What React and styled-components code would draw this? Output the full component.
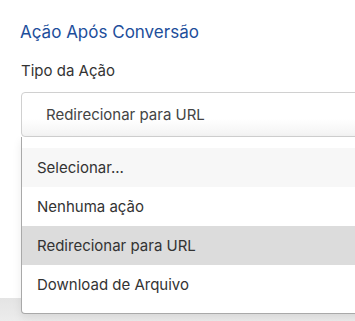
import React from "react";
import styled, { createGlobalStyle } from "styled-components";

const Global = createGlobalStyle`
  html, body { margin: 0; padding: 0; background: #ffffff; overflow: hidden; }
  body { font-family: Inter, "Noto Sans", sans-serif; }
`;

const Page = styled.div`
  width: 355px;
  height: 321px;
  display: flex;
  flex-direction: column;
  overflow: hidden;
`;

const Panel = styled.div`
  height: 298px;
  padding: 20px 0 0 20px;
  box-sizing: border-box;
  background: #ffffff;
`;

const Footer = styled.div`
  flex: 1;
  background: linear-gradient(#e4e4e4, #ececec);
`;

const Heading = styled.h3`
  margin: 0;
  font-size: 17px;
  line-height: 24px;
  font-weight: 400;
  color: #1d4e9b;
`;

const Label = styled.div`
  margin-top: 17px;
  margin-left: 1px;
  font-size: 15px;
  line-height: 20px;
  color: #333333;
`;

const Field = styled.div`
  position: relative;
  margin-top: 11px;
  margin-left: 1px;
  margin-right: -20px;
`;

const Select = styled.div`
  height: 45px;
  box-sizing: border-box;
  border: 1px solid #d0d0d0;
  border-radius: 4px;
  background: linear-gradient(#ffffff 60%, #f3f3f3);
  padding-left: 24px;
  display: flex;
  align-items: center;
  font-size: 15px;
  color: #444444;
`;

const Menu = styled.ul`
  position: absolute;
  top: 45px;
  left: 0;
  right: 0;
  margin: 0;
  list-style: none;
  padding: 11px 0 9px;
  background: #ffffff;
  border: 1px solid #a9a9a9;
  border-top: none;
  border-radius: 0 0 4px 4px;
  box-shadow: 0 4px 10px rgba(0, 0, 0, 0.08);
`;

const Option = styled.li`
  height: 39px;
  padding-left: 15px;
  display: flex;
  align-items: center;
  font-size: 15px;
  color: #333333;
  background: ${(p) => (p.$active ? "#dcdcdc" : p.$placeholder ? "#f7f7f7" : "#ffffff")};
`;

const options = [
  { label: "Selecionar...", placeholder: true },
  { label: "Nenhuma ação" },
  { label: "Redirecionar para URL", active: true },
  { label: "Download de Arquivo" },
];

export default function App() {
  return (
    <Page>
      <Global />
      <Panel>
        <Heading>Ação Após Conversão</Heading>
        <Label>Tipo da Ação</Label>
        <Field>
          <Select>Redirecionar para URL</Select>
          <Menu>
            {options.map((o) => (
              <Option key={o.label} $active={o.active} $placeholder={o.placeholder}>
                {o.label}
              </Option>
            ))}
          </Menu>
        </Field>
      </Panel>
      <Footer />
    </Page>
  );
}
